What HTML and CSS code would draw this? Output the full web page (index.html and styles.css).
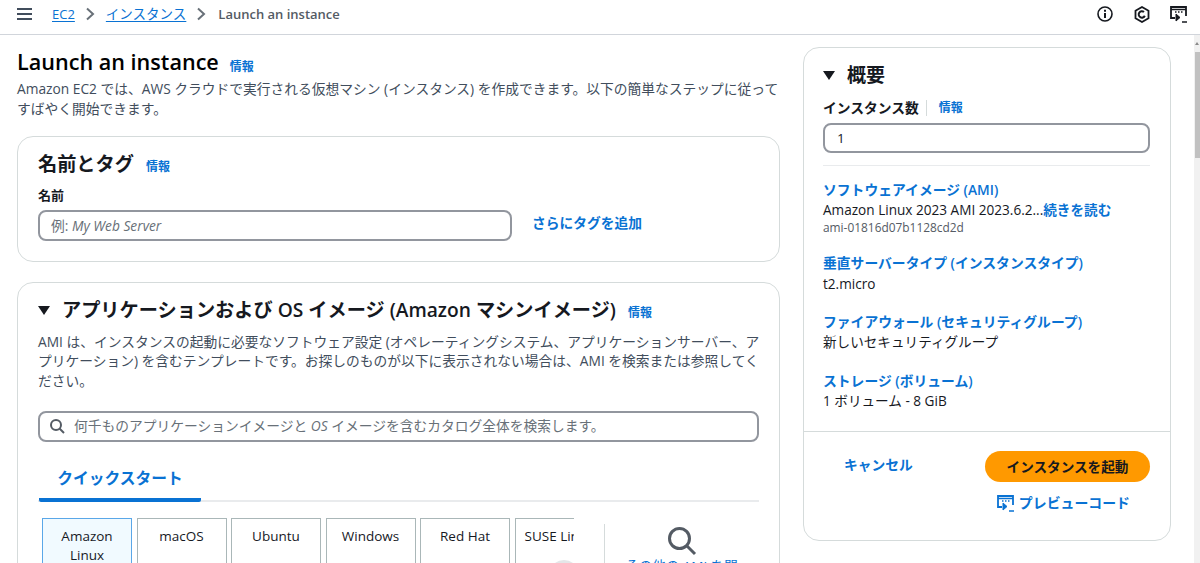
FILE: index.html
```html
<!DOCTYPE html>
<html lang="ja">
<head>
<meta charset="utf-8">
<title>Launch an instance</title>
<link rel="stylesheet" href="styles.css">
</head>
<body>
<div class="page">
  <header class="topbar">
    <svg class="menu" width="15" height="14" viewBox="0 0 15 14"><path d="M0 2h15M0 7h15M0 12h15" fill="none" stroke="#414d5c" stroke-width="2"/></svg>
    <nav class="crumbs">
      <a class="crumb first-crumb">EC2</a>
      <svg class="chev" width="10" height="14" viewBox="0 0 10 14"><path d="M2 1.500l6 5.500-6 5.500" fill="none" stroke="#687078" stroke-width="2"/></svg>
      <a class="crumb">インスタンス</a>
      <svg class="chev" width="10" height="14" viewBox="0 0 10 14"><path d="M2 1.500l6 5.500-6 5.500" fill="none" stroke="#687078" stroke-width="2"/></svg>
      <span class="crumb-current">Launch an instance</span>
    </nav>
    <div class="top-icons">
      <svg width="16" height="16" viewBox="0 0 16 16"><circle cx="8" cy="8" r="7" fill="none" stroke="#16191f" stroke-width="1.600"/><path d="M8 7v5M8 3.800v1.900" stroke="#16191f" stroke-width="2" fill="none"/></svg>
      <svg width="16" height="17" viewBox="0 0 16 17"><path d="M8 1l6.500 3.700v7.600L8 16l-6.500-3.700V4.700z" fill="none" stroke="#16191f" stroke-width="1.800"/><path d="M10.800 9.800A3.200 3.200 0 1 1 10 6" fill="none" stroke="#16191f" stroke-width="2"/></svg>
      <svg class="code-icon" width="18" height="17" viewBox="0 0 18 17"><path d="M5 12H1V1h15v9" fill="none" stroke="#16191f" stroke-width="1.800"/><path d="M1 3.500h15" stroke="#16191f" stroke-width="1.500"/><path d="M5 6h1.500M8 6h1.500M11 6h1.500" stroke="#16191f" stroke-width="1.400"/><path d="M6 8l4 3.500-4 3.500z" fill="#16191f" stroke="#16191f" stroke-width="1"/><path d="M12 16h5" stroke="#16191f" stroke-width="1.500"/></svg>
    </div>
  </header>

  <div class="content">
    <main class="main-col">
      <div class="page-title">
        <h1>Launch an instance</h1>
        <a class="info">情報</a>
      </div>
      <p class="lead">Amazon EC2 では、AWS クラウドで実行される仮想マシン (インスタンス) を作成できます。以下の簡単なステップに従って<br>すばやく開始できます。</p>

      <section class="card name-card">
        <div class="card-head">
          <h2>名前とタグ</h2>
          <a class="info">情報</a>
        </div>
        <label class="field-label">名前</label>
        <div class="name-row">
          <div class="input placeholder name-input"><span>例: <i>My Web Server</i></span></div>
          <a class="add-tag">さらにタグを追加</a>
        </div>
      </section>

      <section class="card ami-card">
        <div class="card-head">
          <span class="tri"></span>
          <h2>アプリケーションおよび OS イメージ (Amazon マシンイメージ)</h2>
          <a class="info">情報</a>
        </div>
        <p class="ami-desc">AMI は、インスタンスの起動に必要なソフトウェア設定 (オペレーティングシステム、アプリケーションサーバー、ア<br>プリケーション) を含むテンプレートです。お探しのものが以下に表示されない場合は、AMI を検索または参照してく<br>ださい。</p>
        <div class="input search placeholder">
          <svg width="16" height="16" viewBox="0 0 16 16"><circle cx="7" cy="7" r="5" fill="none" stroke="#545b64" stroke-width="2"/><path d="M10.500 10.500L15 15" stroke="#545b64" stroke-width="2"/></svg>
          <span>何千ものアプリケーションイメージと <i>OS</i> イメージを含むカタログ全体を検索します。</span>
        </div>
        <div class="tabs">
          <div class="tab">クイックスタート</div>
        </div>
        <div class="os-row">
          <div class="os-list">
            <div class="os-tile selected">Amazon Linux</div>
            <div class="os-tile">macOS</div>
            <div class="os-tile">Ubuntu</div>
            <div class="os-tile">Windows</div>
            <div class="os-tile">Red Hat</div>
            <div class="os-tile suse">SUSE Linux</div>
          </div>
          <span class="scroll-btn"></span>
          <div class="browse">
            <svg width="30" height="30" viewBox="0 0 30 30"><circle cx="12.500" cy="12.500" r="10" fill="none" stroke="#545b64" stroke-width="3"/><path d="M20 20l8 8" stroke="#545b64" stroke-width="3"/></svg>
            <a>その他の AMI を閲覧</a>
          </div>
        </div>
      </section>
    </main>

    <aside class="summary">
      <div class="summary-body">
        <div class="summary-head">
          <span class="tri"></span>
          <h2>概要</h2>
        </div>
        <div class="count-label">
          <strong>インスタンス数</strong>
          <a class="info">情報</a>
        </div>
        <div class="input count-input">1</div>
        <div class="sum-list">
          <div class="sum-item">
            <a>ソフトウェアイメージ (AMI)</a>
            <p>Amazon Linux 2023 AMI 2023.6.2...<span class="more">続きを読む</span></p>
            <small>ami-01816d07b1128cd2d</small>
          </div>
          <div class="sum-item">
            <a>垂直サーバータイプ (インスタンスタイプ)</a>
            <p>t2.micro</p>
          </div>
          <div class="sum-item">
            <a>ファイアウォール (セキュリティグループ)</a>
            <p>新しいセキュリティグループ</p>
          </div>
          <div class="sum-item">
            <a>ストレージ (ボリューム)</a>
            <p>1 ボリューム - 8 GiB</p>
          </div>
        </div>
      </div>
      <div class="summary-foot">
        <div class="foot-row">
          <a class="cancel">キャンセル</a>
          <button class="launch">インスタンスを起動</button>
        </div>
        <a class="preview">
          <svg width="18" height="17" viewBox="0 0 18 17"><path d="M5 12H1V1h15v9" fill="none" stroke="#0972d3" stroke-width="1.800"/><path d="M1 3.500h15" stroke="#0972d3" stroke-width="1.500"/><path d="M5 6h1.500M8 6h1.500M11 6h1.500" stroke="#0972d3" stroke-width="1.400"/><path d="M6 8l4 3.500-4 3.500z" fill="#0972d3" stroke="#0972d3" stroke-width="1"/><path d="M12 16h5" stroke="#0972d3" stroke-width="1.500"/></svg>
          プレビューコード
        </a>
      </div>
    </aside>
  </div>

  <div class="scrollbar"><span class="arrow"></span><span class="thumb"></span></div>
</div>
</body>
</html>
```
FILE: styles.css
```css
* { box-sizing: border-box; }
html, body { margin: 0; height: 100%; overflow: hidden; }
body {
  font-family: "Open Sans", "Noto Sans CJK JP", sans-serif;
  font-size: 13.75px;
  line-height: 20px;
  color: #16191f;
  background: #fff;
}
a { color: #0972d3; }
h1, h2, p { margin: 0; }
.page { position: relative; width: 1200px; height: 563px; overflow: hidden; }

.topbar {
  height: 35px;
  display: flex;
  align-items: center;
  padding: 0 12px 0 17px;
  border-bottom: 1px solid #d1d5db;
}
.menu { flex: none; margin-top: -6px; }
.crumbs { display: flex; align-items: center; margin: -6px 0 0 20px; font-size: 13.5px; }
.crumb { color: #0972d3; text-decoration: underline; text-underline-offset: 2px; }
.first-crumb { font-size: 13px; }
.chev { margin: 0 11px 0 10px; }
.crumb-current { color: #545b64; font-weight: 600; font-size: 13px; margin-left: 1px; }
.top-icons { margin: -6px 0 0 auto; display: flex; align-items: center; gap: 21px; }
.code-icon { margin-left: -1px; }

.content {
  display: flex;
  align-items: flex-start;
  gap: 23px;
  padding: 12px 0 0 17px;
}
.main-col { width: 763px; flex: none; }
.page-title { display: flex; align-items: center; gap: 11px; height: 30px; }
h1 { font-size: 21.6px; line-height: 30px; font-weight: 600; color: #000; }
.info { font-size: 12px; line-height: 16px; font-weight: 600; color: #0972d3; }
.page-title .info { margin-top: 10px; }
.lead { font-size: 13.75px; line-height: 20px; color: #414d5c; margin-top: 2px; }

.card {
  border: 1px solid #d5dbdb;
  border-radius: 16px;
  background: #fff;
}
.name-card { height: 126px; margin-top: 17px; padding: 14px 20px; }
.card-head { display: flex; align-items: center; }
.card-head h2 { font-size: 19.2px; line-height: 26px; font-weight: 600; white-space: nowrap; }
.name-card .info { margin: 6px 0 0 12px; }
.field-label { display: block; font-size: 13px; font-weight: 600; line-height: 18px; margin-top: 9px; }
.name-row { display: flex; align-items: center; margin-top: 6px; }
.input {
  height: 31px;
  border: 2px solid #92969e;
  border-radius: 8px;
  display: flex;
  align-items: center;
  background: #fff;
}
.placeholder { color: #687078; font-size: 13.75px; }
.name-input { width: 474px; padding-left: 11px; }
.add-tag { margin-left: 20px; font-size: 13.75px; font-weight: 600; margin-top: -6px; }

.ami-card { height: 320px; margin-top: 20px; padding: 14px 20px 0; position: relative; }
.tri {
  width: 0; height: 0; flex: none;
  border-left: 6.5px solid transparent;
  border-right: 6.5px solid transparent;
  border-top: 9px solid #16191f;
}
.ami-card .tri { margin-right: 12px; }
.ami-card .info { margin: 6px 0 0 12px; }
.ami-desc { font-size: 13.75px; line-height: 19.25px; color: #414d5c; margin-top: 9px; white-space: nowrap; }
.search { margin-top: 21px; padding-left: 9px; gap: 9px; }
.tabs { margin-top: 20px; height: 40px; border-bottom: 2px solid #e9ebed; }
.tab {
  width: 162px;
  height: 40px;
  border-bottom: 4px solid #0972d3;
  border-radius: 2px;
  color: #0972d3;
  font-size: 15.75px;
  font-weight: 600;
  text-align: center;
  line-height: 32px;
  margin-left: 1px;
}
.os-row { display: flex; margin-top: 16px; }
.os-list { display: flex; gap: 4.5px; width: 532px; overflow: hidden; margin-left: 4px; }
.os-tile {
  width: 90px; height: 70px; flex: none;
  border: 1px solid #aab7b8;
  text-align: center;
  font-size: 13.5px;
  line-height: 19px;
  padding: 8px 4px 0;
  color: #16191f;
}
.os-tile.selected { background: #f1faff; border-color: #5aa7e8; }
.os-tile.suse { white-space: nowrap; overflow: hidden; text-align: left; padding-left: 9px; }
.scroll-btn {
  position: absolute;
  left: 531px; top: 277px;
  width: 30px; height: 30px;
  border-radius: 50%;
  background: #e4e6e8;
}
.browse {
  margin-left: 30px;
  width: 154px;
  height: 80px;
  margin-top: 6px;
  border-left: 1px solid #d5dbdb;
  display: flex;
  flex-direction: column;
  align-items: center;
  padding-top: 2px;
}
.browse svg { flex: none; }
.browse a { width: 116px; text-align: center; font-size: 13.5px; }

.summary {
  width: 368px;
  height: 494px;
  flex: none;
  border: 1px solid #d5dbdb;
  border-radius: 16px;
  display: flex;
  flex-direction: column;
}
.summary-body { padding: 15px 20px 0 19px; height: 383px; }
.summary-head { display: flex; align-items: center; gap: 12px; }
.summary-head h2 { font-size: 19px; line-height: 24px; font-weight: 600; }
.count-label { display: flex; align-items: center; margin-top: 12px; height: 18px; }
.count-label strong { font-size: 13.75px; font-weight: 600; }
.count-label .info { margin-left: 7px; padding-left: 12px; border-left: 1px solid #d5dbdb; }
.count-input { width: 327px; margin-top: 6px; padding-left: 12px; font-size: 13.5px; height: 30px; }
.sum-list { margin-top: 12px; padding-top: 14px; border-top: 1px solid #e9ebed; }
.sum-item { margin-bottom: 20px; }
.sum-item:first-child { margin-bottom: 17px; }
.sum-item:nth-child(2) { margin-bottom: 19px; }
.sum-item:nth-child(2) p { margin-top: 1px; }
.sum-item a { display: block; font-size: 13.8px; line-height: 20px; font-weight: 600; }
.sum-item p { font-size: 13.6px; line-height: 19px; color: #16191f; }
.sum-item .more { color: #0972d3; font-weight: 600; }
.sum-item small { display: block; font-size: 11.9px; line-height: 18px; margin-top: -1px; color: #545b64; }
.summary-foot { border-top: 1px solid #d5dbdb; padding: 19px 20px 0 40px; }
.foot-row { display: flex; align-items: center; justify-content: space-between; }
.cancel { font-size: 13.75px; font-weight: 600; margin-top: -3px; }
.launch {
  width: 165px;
  height: 31px;
  border: 0;
  border-radius: 16px;
  background: #ff9900;
  color: #16191f;
  font: 600 13.6px/20px "Open Sans", "Noto Sans CJK JP", sans-serif;
}
.preview { display: flex; align-items: center; justify-content: flex-end; gap: 4px; margin: 11px 20px 0 0; font-size: 13.9px; font-weight: 600; }

.scrollbar { position: absolute; top: 35px; right: 0; bottom: 0; width: 6px; background: #f1f1f1; }
.arrow { position: absolute; left: 1px; top: 7px; width: 0; height: 0; border-left: 2px solid transparent; border-right: 2px solid transparent; border-bottom: 3px solid #8a8a8a; }
.thumb { position: absolute; left: 1px; top: 17px; width: 5px; height: 106px; background: #c1c1c1; }
```
